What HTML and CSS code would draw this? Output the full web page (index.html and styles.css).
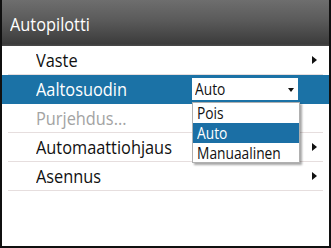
FILE: index.html
```html
<!DOCTYPE html>
<html>
<head>
<meta charset="utf-8">
<link rel="stylesheet" href="styles.css">
</head>
<body>
<div class="panel">
  <div class="title"><span class="t">Autopilotti</span></div>
  <div class="list">
    <div class="row"><div class="inner"><span class="label"><span class="t">Vaste</span></span><span class="arrow"></span></div></div>
    <div class="row active"><div class="inner"><span class="label fixed"><span class="t">Aaltosuodin</span></span>
      <div class="select"><span class="t">Auto</span><span class="caret"></span></div></div></div>
    <div class="row"><div class="inner"><span class="label disabled"><span class="t">Purjehdus...</span></span></div></div>
    <div class="row"><div class="inner"><span class="label"><span class="t">Automaattiohjaus</span></span><span class="arrow"></span></div></div>
    <div class="row"><div class="inner"><span class="label"><span class="t">Asennus</span></span><span class="arrow"></span></div></div>
  </div>
  <div class="popup">
    <div class="opt"><span class="t">Pois</span></div>
    <div class="opt sel"><span class="t">Auto</span></div>
    <div class="opt"><span class="t">Manuaalinen</span></div>
  </div>
</div>
</body>
</html>
```
FILE: styles.css
```css
html, body { margin: 0; padding: 0; }
body {
  width: 331px; height: 248px; overflow: hidden;
  font-family: "Open Sans", "Noto Sans", sans-serif;
  background: #0d0d0d;
}
.t {
  display: inline-block;
  transform: scaleX(0.86);
  transform-origin: left center;
  white-space: nowrap;
}
.panel {
  position: relative;
  box-sizing: border-box;
  width: 331px; height: 248px;
  border: 2px solid #101010;
  border-top: none;
  background: #fff;
}
.title {
  height: 46px;
  box-sizing: border-box;
  padding: 11px 0 0 8px;
  background: linear-gradient(#6e6e6e, #5a5a5a 45%, #3c3c3c 95%, #4a4a4a);
  color: #fff;
  font-size: 19px;
  line-height: 26px;
}
.row { height: 29px; }
.row.active { background: #1b72a6; }
.inner {
  height: 29px; box-sizing: border-box;
  margin: 0 6px;
  padding: 0 6px 0 28px;
  border-bottom: 1px solid #e6dede;
  display: flex; align-items: center;
}
.row.active .inner { border-bottom-color: transparent; }
.label {
  flex: 1;
  font-size: 19px;
  color: #111;
  line-height: 24px;
  padding-bottom: 1px;
}
.active .label { color: #fff; }
.label.fixed { flex: 0 0 156px; }
.label.disabled { color: #a3a3a3; }
.arrow {
  width: 0; height: 0;
  border-top: 4px solid transparent;
  border-bottom: 4px solid transparent;
  border-left: 5px solid #111;
}
.select {
  width: 106px; height: 22px; box-sizing: border-box;
  background: #fff;
  display: flex; align-items: center; justify-content: space-between;
  padding: 0 4px 0 3px;
  font-size: 16px;
  color: #111;
}
.select .t { flex: 1; }
.caret {
  width: 0; height: 0;
  border-left: 3px solid transparent;
  border-right: 3px solid transparent;
  border-top: 4px solid #111;
  margin-top: 2px;
}
.popup {
  position: absolute;
  left: 190px; top: 102px;
  width: 108px; height: 61px; box-sizing: border-box;
  background: #fff;
  border: 1px solid #b0b0b0;
  box-shadow: 2px 2px 2px rgba(0,0,0,0.35);
}
.opt {
  height: 20px;
  font-size: 16px;
  line-height: 20px;
  padding-left: 4px;
  color: #111;
}
.opt.sel { background: #1b6fa5; color: #fff; }
```
